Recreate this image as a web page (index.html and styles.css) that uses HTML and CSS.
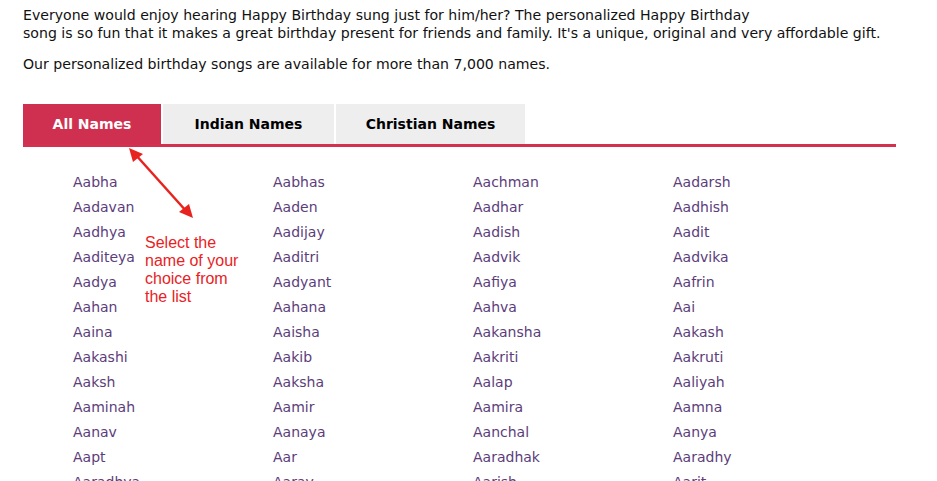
FILE: index.html
```html
<!DOCTYPE html>
<html lang="en">
<head>
    <meta charset="UTF-8">
    <title>Personalized Birthday Songs</title>
    <link rel="stylesheet" href="styles.css">
</head>
<body>

    <div class="content">
        <p class="intro">Everyone would enjoy hearing Happy Birthday sung just for him/her? The personalized Happy Birthday<br>
        song is so fun that it makes a great birthday present for friends and family. It's a unique, original and very affordable gift.</p>
        <p class="intro">Our personalized birthday songs are available for more than 7,000 names.</p>

        <!-- Tabs -->
        <div class="tabs">
            <a class="tab active" href="#">All Names</a>
            <a class="tab tab-indian" href="#">Indian Names</a>
            <a class="tab tab-christian" href="#">Christian Names</a>
        </div>

        <!-- Names list -->
        <div class="names-wrap">
            <ul class="names">
                <li><a href="#">Aabha</a></li><li><a href="#">Aabhas</a></li><li><a href="#">Aachman</a></li><li><a href="#">Aadarsh</a></li>
                <li><a href="#">Aadavan</a></li><li><a href="#">Aaden</a></li><li><a href="#">Aadhar</a></li><li><a href="#">Aadhish</a></li>
                <li><a href="#">Aadhya</a></li><li><a href="#">Aadijay</a></li><li><a href="#">Aadish</a></li><li><a href="#">Aadit</a></li>
                <li><a href="#">Aaditeya</a></li><li><a href="#">Aaditri</a></li><li><a href="#">Aadvik</a></li><li><a href="#">Aadvika</a></li>
                <li><a href="#">Aadya</a></li><li><a href="#">Aadyant</a></li><li><a href="#">Aafiya</a></li><li><a href="#">Aafrin</a></li>
                <li><a href="#">Aahan</a></li><li><a href="#">Aahana</a></li><li><a href="#">Aahva</a></li><li><a href="#">Aai</a></li>
                <li><a href="#">Aaina</a></li><li><a href="#">Aaisha</a></li><li><a href="#">Aakansha</a></li><li><a href="#">Aakash</a></li>
                <li><a href="#">Aakashi</a></li><li><a href="#">Aakib</a></li><li><a href="#">Aakriti</a></li><li><a href="#">Aakruti</a></li>
                <li><a href="#">Aaksh</a></li><li><a href="#">Aaksha</a></li><li><a href="#">Aalap</a></li><li><a href="#">Aaliyah</a></li>
                <li><a href="#">Aaminah</a></li><li><a href="#">Aamir</a></li><li><a href="#">Aamira</a></li><li><a href="#">Aamna</a></li>
                <li><a href="#">Aanav</a></li><li><a href="#">Aanaya</a></li><li><a href="#">Aanchal</a></li><li><a href="#">Aanya</a></li>
                <li><a href="#">Aapt</a></li><li><a href="#">Aar</a></li><li><a href="#">Aaradhak</a></li><li><a href="#">Aaradhy</a></li>
                <li><a href="#">Aaradhya</a></li><li><a href="#">Aarav</a></li><li><a href="#">Aarish</a></li><li><a href="#">Aarit</a></li>
            </ul>

            <!-- Annotation over the list -->
            <svg class="note-arrow" width="80" height="80" viewBox="0 0 80 80">
                <line x1="8" y1="6" x2="60" y2="64" stroke="#e8231f" stroke-width="2.5"/>
                <polygon points="2,0 16,6 6,14" fill="#e8231f"/>
                <polygon points="66,70 52,64 62,56" fill="#e8231f"/>
            </svg>
            <div class="note-text">Select the<br>name of your<br>choice from<br>the list</div>
        </div>
    </div>

</body>
</html>
```

FILE: styles.css
```css
body {
    margin: 0;
    font-family: "DejaVu Sans", Verdana, sans-serif;
    color: #111;
    background-color: #fff;
}
.content {
    width: 873px;
    padding: 6px 0 0 23px;
}
.intro {
    font-size: 14.1px;
    line-height: 18px;
    margin: 0 0 13px 0;
}
.tabs {
    display: flex;
    gap: 2px;
    margin-top: 31px;
    border-bottom: 3px solid #d3304f;
}
.tab {
    display: block;
    height: 40px;
    line-height: 40px;
    text-align: center;
    font-weight: bold;
    font-size: 14px;
    color: #000;
    text-decoration: none;
    background-color: #eeeeee;
}
.tab.active {
    width: 138px;
    background-color: #d0304f;
    color: #fff;
}
.tab-indian {
    width: 171px;
}
.tab-christian {
    width: 189px;
}
.names-wrap {
    position: relative;
}
.names {
    list-style: none;
    margin: 0;
    padding: 25px 0 0 50px;
    display: grid;
    grid-template-columns: repeat(4, 200px);
}
.names li {
    height: 25px;
    line-height: 20px;
    font-size: 14px;
}
.names a {
    color: #5c3d7a;
    text-decoration: none;
}
.note-arrow {
    position: absolute;
    left: 104px;
    top: 1px;
}
.note-text {
    position: absolute;
    left: 122px;
    top: 87px;
    font-family: "Liberation Sans", Arial, sans-serif;
    font-size: 16px;
    line-height: 18px;
    color: #e8231f;
}
```
